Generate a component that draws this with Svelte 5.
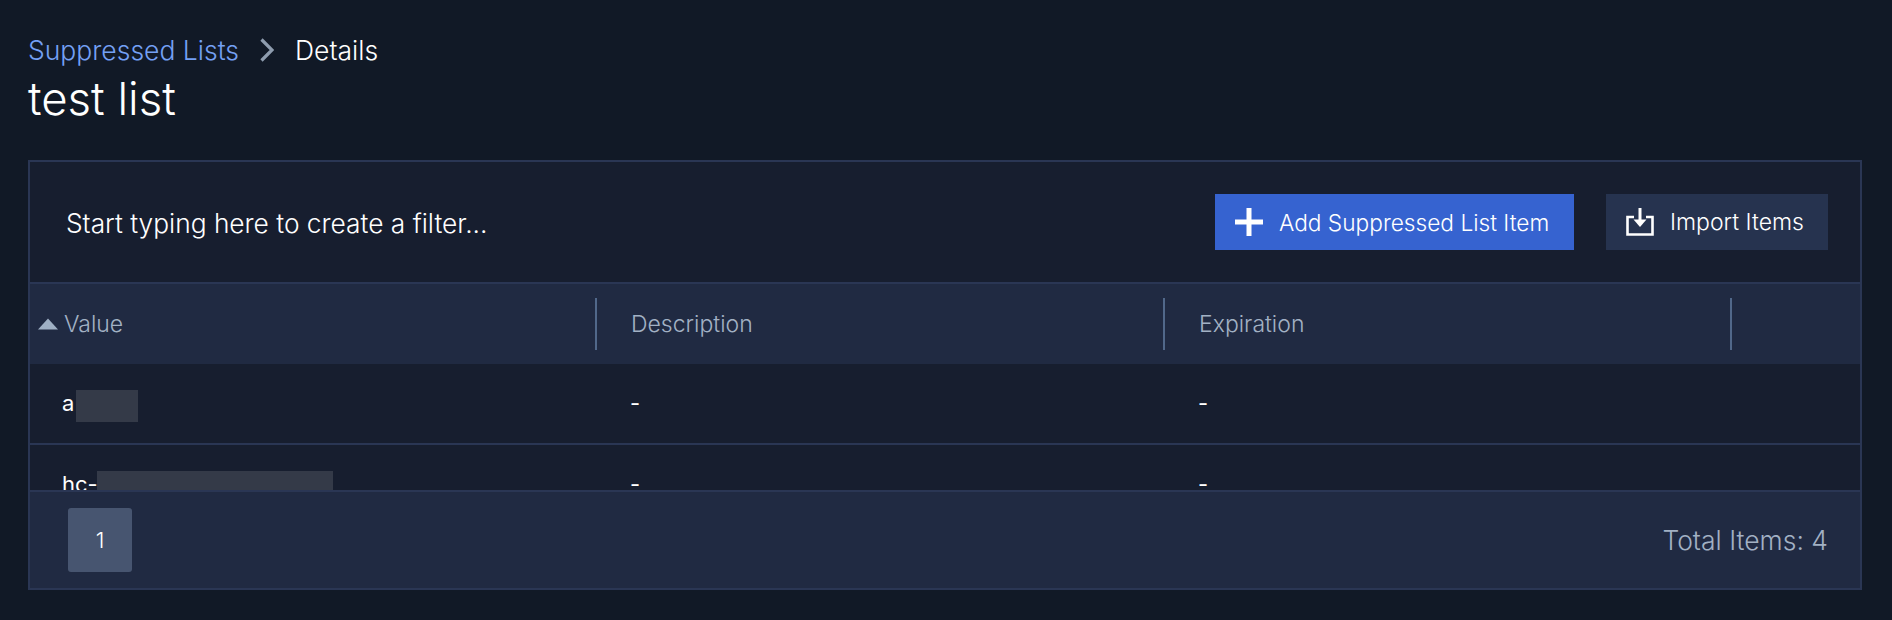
<script>
    const columns = [
        { label: 'Value', sorted: true },
        { label: 'Description' },
        { label: 'Expiration' },
        { label: '' }
    ];

    // the reference masks part of each value, so nudge is the gap to the mask
    const rows = [
        { prefix: 'a', nudge: 2, blur: 62, description: '-', expiration: '-' },
        { prefix: 'hc-', nudge: -1, blur: 236, description: '-', expiration: '-' }
    ];
</script>

<main class="page">
    <nav class="crumbs">
        <a href="#lists">Suppressed Lists</a>
        <svg class="chevron" width="14" height="24" viewBox="0 0 14 24" aria-hidden="true">
            <path d="M1.5 1.5 L12 12 L1.5 22.5" fill="none" stroke="#8e9cae" stroke-width="3.2" />
        </svg>
        <span>Details</span>
    </nav>
    <h1>test list</h1>

    <section class="panel">
        <div class="toolbar">
            <span class="filter">Start typing here to create a filter...</span>
            <button class="btn primary">
                <svg width="28" height="28" viewBox="0 0 28 28" aria-hidden="true">
                    <path d="M14 0 V28 M0 14 H28" stroke="#fff" stroke-width="5" fill="none" />
                </svg>
                Add Suppressed List Item
            </button>
            <button class="btn secondary">
                <svg width="28" height="28" viewBox="0 0 28 28" aria-hidden="true">
                    <path d="M8 9 H1.5 V26.5 H26.5 V9 H20" stroke="#fff" stroke-width="2.6" fill="none" />
                    <path d="M14 0 V12" stroke="#fff" stroke-width="3" fill="none" />
                    <path d="M7.5 11.5 H20.5 L14 19 Z" fill="#fff" />
                </svg>
                Import Items
            </button>
        </div>

        <div class="head">
            {#each columns as col}
                <div class="th">
                    {#if col.sorted}
                        <svg class="sort" width="20" height="12" viewBox="0 0 20 12" aria-hidden="true">
                            <path d="M10 0.5 L20 11.5 H0 Z" fill="#9fb0c4" />
                        </svg>
                    {/if}
                    {col.label}
                </div>
            {/each}
        </div>

        <div class="body">
            {#each rows as row}
                <div class="row">
                    <div class="td"><span>{row.prefix}</span><i class="blur" style="width: {row.blur}px; margin-left: {row.nudge}px"></i></div>
                    <div class="td">{row.description}</div>
                    <div class="td">{row.expiration}</div>
                    <div class="td"></div>
                </div>
            {/each}
        </div>

        <div class="footer">
            <button class="page-btn">1</button>
            <span class="total">Total Items: 4</span>
        </div>
    </section>
</main>

<style>
    :global(body) {
        background: #111926;
        font-family: Inter, "Noto Sans", sans-serif;
    }

    .page {
        padding: 34px 30px 30px 28px;
        height: 620px;
        box-sizing: border-box;
        color: #fff;
    }

    .crumbs {
        display: flex;
        align-items: center;
        height: 32px;
        font-size: 26.5px;
        font-weight: 300;
    }

    .crumbs a {
        color: #74a0f4;
        text-decoration: none;
    }

    .chevron {
        margin: 0 21px;
    }

    h1 {
        margin: 3px 0 0;
        height: 59px;
        font-size: 45.5px;
        line-height: 60px;
        font-weight: 300;
    }

    .panel {
        margin-top: 32px;
        height: 430px;
        box-sizing: border-box;
        border: 2px solid #2a3654;
        background: #171e2f;
        display: flex;
        flex-direction: column;
    }

    .toolbar {
        display: flex;
        align-items: center;
        height: 120px;
        flex: none;
        padding: 0 32px 0 36px;
        border-bottom: 2px solid #2a3654;
        box-sizing: content-box;
        gap: 32px;
    }

    .filter {
        flex: 1;
        padding-top: 2px;
        font-size: 26.3px;
        font-weight: 300;
    }

    .btn {
        display: flex;
        align-items: center;
        gap: 16px;
        height: 56px;
        padding: 0 0 0 20px;
        border: none;
        color: #fff;
        font: inherit;
        font-size: 22.7px;
        font-weight: 300;
        white-space: nowrap;
    }

    .primary {
        background: #3663d0;
        width: 359px;
    }

    .secondary {
        background: #26334f;
        width: 222px;
        font-size: 23px;
    }

    .head {
        display: grid;
        grid-template-columns: 567px 568px 567px 1fr;
        height: 80px;
        flex: none;
        align-items: center;
        background: #202a42;
    }

    .th {
        display: flex;
        align-items: center;
        gap: 6px;
        height: 52px;
        padding-left: 34px;
        box-sizing: border-box;
        border-right: 2px solid #51688a;
        color: #a2b1c4;
        font-size: 23px;
        font-weight: 300;
    }

    .th:first-child {
        padding-left: 8px;
    }

    .th:last-child {
        border-right: none;
    }

    .body {
        flex: 1;
        min-height: 0;
        overflow: hidden;
    }

    .row {
        display: grid;
        grid-template-columns: 567px 568px 567px 1fr;
        height: 77px;
        padding-bottom: 2px;
        border-bottom: 2px solid #2a3654;
        align-items: center;
    }

    .td {
        display: flex;
        align-items: center;
        padding-left: 33px;
        font-size: 22px;
        font-weight: 400;
    }

    .td:first-child {
        padding-left: 32px;
    }

    .blur {
        height: 32px;
        margin-top: 6px;
        background: #343a48;
    }

    .footer {
        flex: none;
        height: 96px;
        display: flex;
        align-items: center;
        justify-content: space-between;
        padding: 0 32px 0 38px;
        background: #202a42;
        border-top: 2px solid #2a3654;
    }

    .page-btn {
        width: 64px;
        height: 64px;
        border: none;
        border-radius: 3px;
        background: #475570;
        color: #fff;
        font: inherit;
        font-size: 22px;
        font-weight: 300;
    }

    .total {
        color: #a2b1c4;
        font-size: 26.5px;
        font-weight: 300;
    }
</style>
